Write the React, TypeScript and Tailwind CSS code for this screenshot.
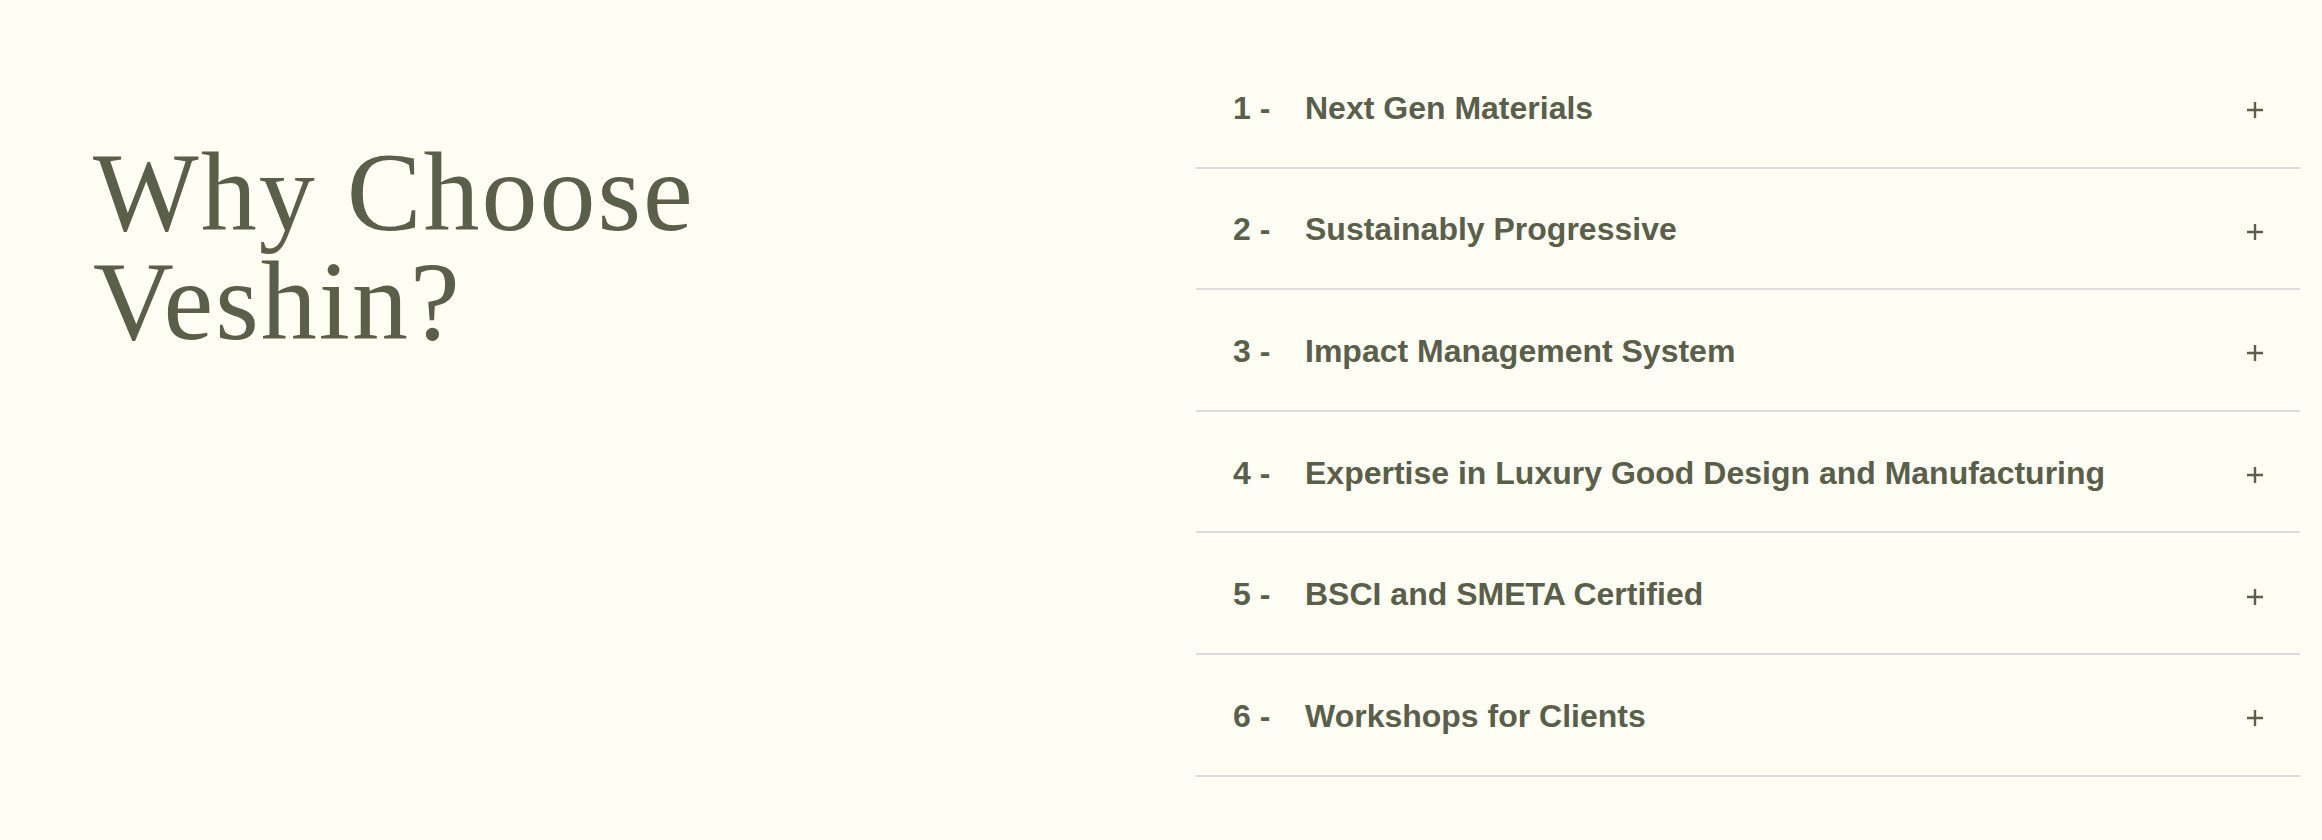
import React from "react";

const items = [
  "Next Gen Materials",
  "Sustainably Progressive",
  "Impact Management System",
  "Expertise in Luxury Good Design and Manufacturing",
  "BSCI and SMETA Certified",
  "Workshops for Clients",
];

function Plus() {
  return (
    <svg width="18" height="18" viewBox="0 0 18 18" className="shrink-0 mt-[5px]">
      <path d="M9 1 V17 M1 9 H17" stroke="#5a5f49" strokeWidth="2.4" />
    </svg>
  );
}

export default function App() {
  return (
    <div className="w-[2322px] h-[840px] bg-[#fefef5] flex items-start pt-[47px] pl-[93px] pr-[22px] text-[#5a5f49]">
      <div className="flex-1 mt-[91px]">
        <h2
          className="text-[112px] leading-[109px] tracking-[2px] font-normal"
          style={{ fontFamily: '"Liberation Serif", "Times New Roman", serif' }}
        >
          <span className="block h-[109px]">Why Choose</span>
          <span className="block h-[109px]">Veshin?</span>
        </h2>
      </div>
      <div
        className="w-[1104px] flex flex-col"
        style={{ fontFamily: '"Liberation Sans", Arial, sans-serif' }}
      >
        {items.map((t, i) => (
          <div
            key={t}
            className="h-[121.6px] border-b-2 border-[#dcdcdc] flex items-center pl-[37px] pr-[36px] pt-[2px]"
          >
            <span className="w-[72px] shrink-0 text-[32px] font-bold leading-none">
              {i + 1} -
            </span>
            <span className="flex-1 text-[32px] font-bold leading-none">{t}</span>
            <Plus />
          </div>
        ))}
      </div>
    </div>
  );
}
